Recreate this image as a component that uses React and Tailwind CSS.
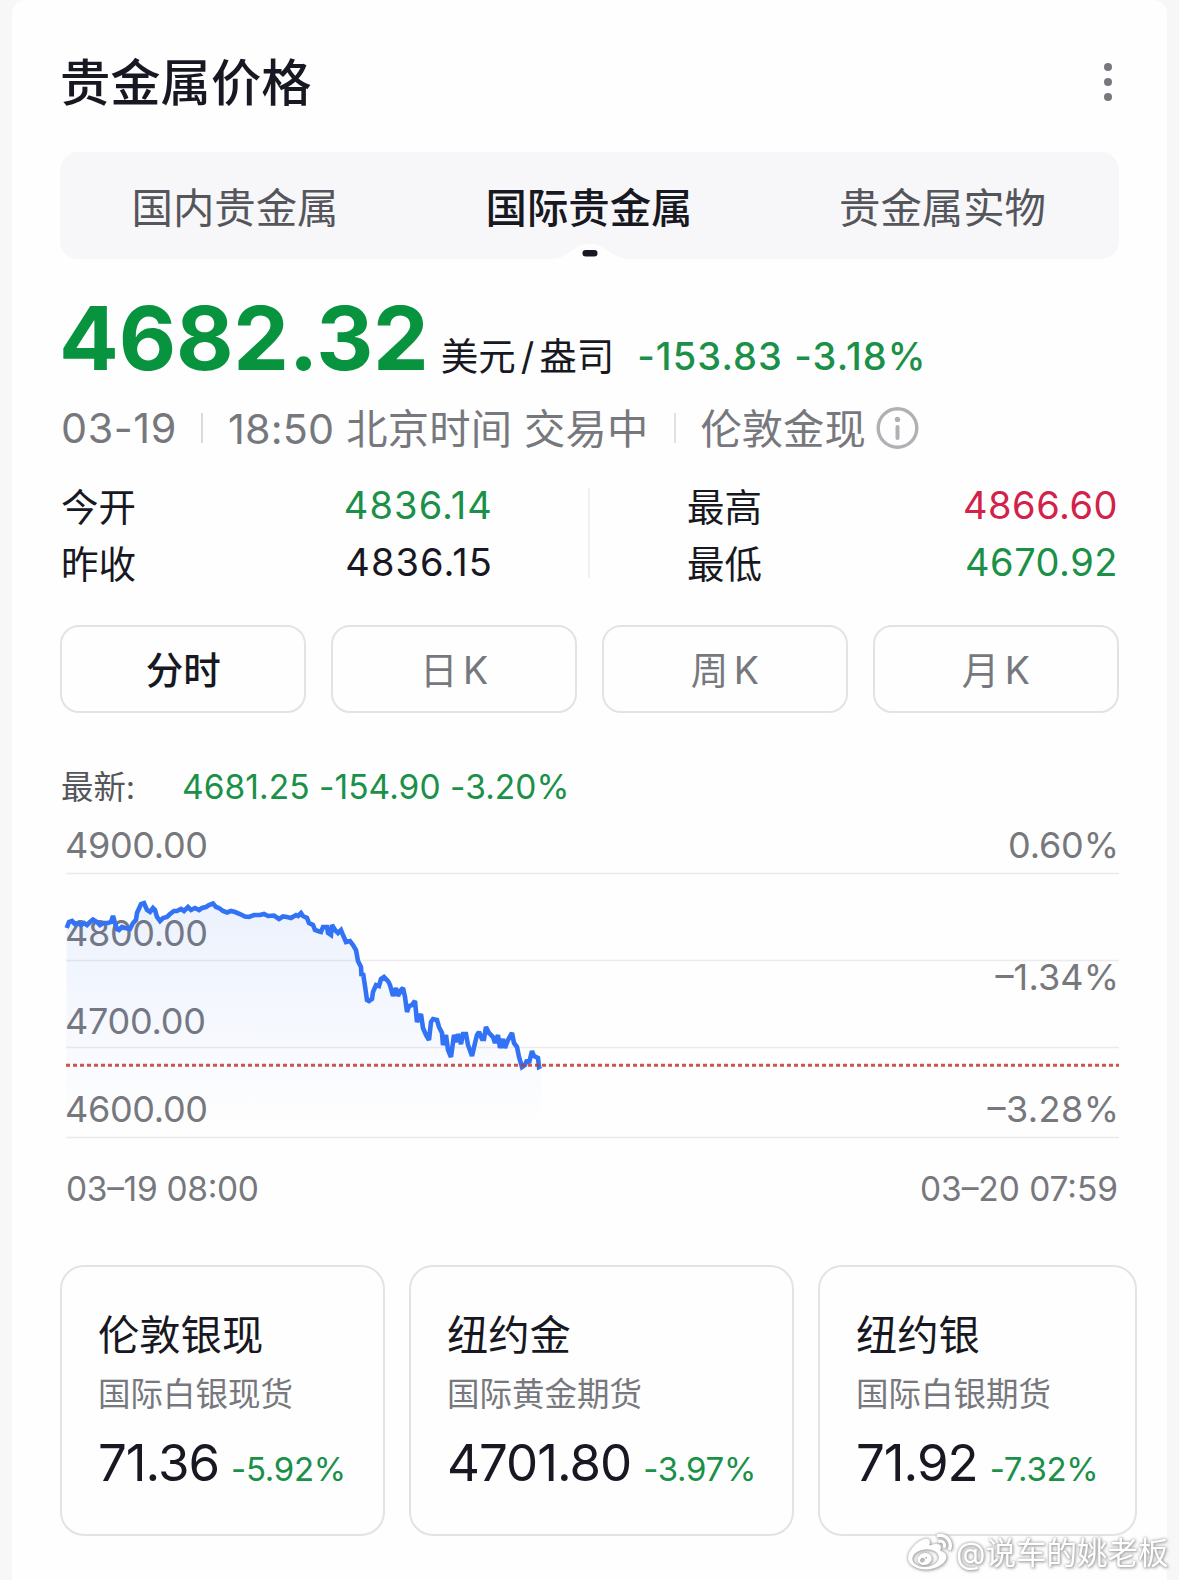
import { FaWeibo } from "react-icons/fa";

const LINE =
  "66.7,928 69,922 72,921 75,924 78,923 81,925 84,923 87,925 90,922 93,919.5 97,922 100,925 103,923 108,923 111,922 113,916 115,923 117,929 119,930 122,927 125,928 130,929 133,923 136,920 137,913 141,904 144,903 147,910 150,912 153,908 155,910 157,917 160,921 163,918 167,917 170,914 174,911 177,911 181,909 184,911 188,907 191,910 195,908 199,910 202,908 206,907 209,905 213,903.5 216,907 219,908 223,911 227,912.5 231,911 235,912 240,914 245,916.5 249,917 254,915 260,915 264,914 268,916 274,915.5 279,919 283,916.5 287,917 291,918 296,915 298,916 301,913 303,916 307,918 309,923 313,925 315,930 318,931 321,932 323,927 327,927 328,933 331,935 332,925 335,930 338,933 341,930 343,935 346,942 350,941 353,945 356,950 358,961 361,967 361.5,976 363,973 365,986 367,1000 369,1001 372,999 373,992 376,985 379,986 381,979 384,977 388,981 390,985 393,996 396,988 398,996 401,990 403,988 405,997 407,1012 409,1006 412,1005 415,1001 417,1022 421,1014 423,1028 426,1035 429,1040 431,1022 433,1019 437,1020 439,1027 442,1033 443,1045 446,1035 448,1050 451,1057 454,1035 457,1042 458,1034 461,1044 463,1034 466,1034 468,1045 472,1056 475,1043 477,1035 479,1032 482,1039 484,1039 486,1027 489,1033 493,1037 495,1043 498,1035 500,1048 503,1039 505,1048 508,1040 512,1033 514,1043 517,1047 519,1057 522,1067 525,1065 527,1060 529,1063 532,1051 534,1056 538,1058 539,1067 541,1066";

function Chart() {
  return (
    <svg
      className="block h-[410px] w-[1059px]"
      viewBox="60 806 1059 410"
      fontFamily='Inter, "Noto Sans CJK SC", sans-serif'
    >
      <defs>
        <linearGradient id="area" x1="0" y1="903" x2="0" y2="1128" gradientUnits="userSpaceOnUse">
          <stop offset="0" stopColor="#3273f6" stopOpacity="0.09" />
          <stop offset="1" stopColor="#3273f6" stopOpacity="0" />
        </linearGradient>
      </defs>
      <g stroke="#ebebed" strokeWidth="1.6">
        <path d="M66 873.5H1119M66 960.5H1119M66 1047.5H1119M66 1137.5H1119" />
      </g>
      <g fontSize="36" fill="#77787d">
        <text x="65" y="858" textLength="143">4900.00</text>
        <text x="65" y="946" textLength="143">4800.00</text>
        <text x="65" y="1034" textLength="141">4700.00</text>
        <text x="65" y="1122" textLength="143">4600.00</text>
        <text x="1008" y="858" textLength="111">0.60%</text>
        <text x="995.5" y="990" textLength="123.5">–1.34%</text>
        <text x="987.5" y="1122" textLength="131.5">–3.28%</text>
      </g>
      <g fontSize="33.5" fill="#77787d">
        <text x="66" y="1200.5" textLength="193">03–19 08:00</text>
        <text x="920" y="1200.5" textLength="198">03–20 07:59</text>
      </g>
      <polygon points={`66,1128 ${LINE} 541,1128`} fill="url(#area)" />
      <polyline points={LINE} fill="none" stroke="#3273f6" strokeWidth="4.6" strokeLinejoin="miter" strokeMiterlimit="2" />
      <path d="M66 1065.3H1119" stroke="#c0392f" strokeOpacity="0.85" strokeWidth="3" strokeDasharray="4 3" />
    </svg>
  );
}

function Stat({ label, value, color }) {
  return (
    <div className="flex h-[57px] items-center justify-between text-[38px]">
      <span className="pt-[6px] pl-px text-[37.5px] tracking-normal">{label}</span>
      <span className={color}>{value}</span>
    </div>
  );
}

function Period({ children, active }) {
  return (
    <div
      className={`flex h-[88px] flex-1 items-center justify-center rounded-[19px] border-2 border-[#e2e3e5] pt-[3px] text-[37.5px] [word-spacing:-5px] ${
        active ? "font-medium text-[#171821]" : "text-[#77787d]"
      }`}
    >
      {children}
    </div>
  );
}

function Quote({ width, name, desc, price, pct }) {
  return (
    <div className={`h-[271px] shrink-0 rounded-[24px] border-2 border-[#e2e3e5] pt-[41px] pl-9 ${width}`}>
      <div className="h-[54px] text-[41.3px] leading-[54px]">{name}</div>
      <div className="mt-[10px] h-[46px] text-[32.5px] leading-[46px] text-[#77787d]">{desc}</div>
      <div className="mt-5 flex items-baseline gap-3 leading-[50px] whitespace-nowrap">
        <span className="text-[51px] tracking-[-1px]">{price}</span>
        <span className="text-[33px] tracking-[-0.3px] text-[#1a9048]">{pct}</span>
      </div>
    </div>
  );
}

export default function App() {
  return (
    <div className="relative h-[1580px] w-[1179px] overflow-hidden bg-[#f7f7f7] px-3 font-[Inter,'Noto_Sans_CJK_SC',sans-serif] leading-none text-[#171821]">
      <main className="h-[1580px] rounded-t-[14px] bg-[#fefefe] pt-[46px] pr-12 pl-12">
        <header className="flex h-[70px] items-center justify-between">
          <h1 className="pt-1 text-[50.3px] font-medium">贵金属价格</h1>
          <div className="mr-[7px] flex flex-col gap-[7px] pt-px">
            <i className="size-2 rounded-full bg-[#77787d]" />
            <i className="size-2 rounded-full bg-[#77787d]" />
            <i className="size-2 rounded-full bg-[#77787d]" />
          </div>
        </header>

        <nav className="relative mt-9 grid h-[107px] w-[1059px] grid-cols-3 items-center rounded-[18px] bg-[#f7f7fa] pt-[6px] text-center text-[41.4px] text-[#55565b]">
          <span className="pr-[3px]">国内贵金属</span>
          <span className="pr-px font-medium text-[#171821]">国际贵金属</span>
          <span>贵金属实物</span>
          <svg className="absolute bottom-0 left-[490px] h-4 w-20" viewBox="0 0 80 16">
            <path d="M0 16C20 16 22 1 40 1S60 16 80 16Z" fill="#fefefe" />
            <rect x="32.5" y="7" width="15" height="6.5" rx="3.2" fill="#171821" />
          </svg>
        </nav>

        <div className="mt-[35px] flex h-[87px] items-baseline leading-[88px] whitespace-nowrap">
          <span className="-ml-px text-[88.5px] font-bold tracking-[-0.2px] text-[#08943f]">4682.32</span>
          <span className="ml-3 text-[37.5px]">
            美元<span className="mx-[5px]">/</span>盎司
          </span>
          <span className="ml-[23px] text-[38px] font-medium tracking-[1.1px] text-[#1a9048]">-153.83 -3.18%</span>
        </div>

        <div className="mt-[22px] flex h-[50px] items-center text-[41.3px] whitespace-nowrap text-[#77787d]">
          <span className="ml-px pt-[2px] tracking-[0.6px]">03-19</span>
          <i className="mr-[25px] ml-[24px] h-[30px] w-0.5 bg-[#d9dadd]" />
          <span className="pt-[3px] tracking-[0.2px]">18:50 北京时间 交易中</span>
          <i className="mr-6 ml-[26px] h-[30px] w-0.5 bg-[#e0e1e3]" />
          <span className="pt-[3px]">伦敦金现</span>
          <svg className="ml-[10px] size-[43px]" viewBox="0 0 43 43" fill="none" stroke="#b0b1b4">
            <circle cx="21.5" cy="21" r="19.3" strokeWidth="3.4" />
            <path d="M21.5 20V31" strokeWidth="4" strokeLinecap="round" />
            <circle cx="21.5" cy="12.4" r="2.7" fill="#b0b1b4" stroke="none" />
          </svg>
        </div>

        <div className="mt-[23px] flex h-[115px] w-[1059px]">
          <div className="w-[433px] tracking-[1.1px]">
            <Stat label="今开" value="4836.14" color="text-[#1a9048]" />
            <Stat label="昨收" value="4836.15" color="text-[#171821]" />
          </div>
          <i className="mt-3 ml-[95px] h-[90px] w-0.5 bg-[#f1f1f3]" />
          <div className="ml-[96px] flex-1 pr-px tracking-[0.5px]">
            <Stat label="最高" value="4866.60" color="text-[#d2224a]" />
            <Stat label="最低" value="4670.92" color="text-[#1a9048]" />
          </div>
        </div>

        <div className="mt-[34px] flex w-[1059px] gap-[24.5px]">
          <Period active>分时</Period>
          <Period>日 K</Period>
          <Period>周 K</Period>
          <Period>月 K</Period>
        </div>

        <div className="mt-[53px] flex h-10 items-center pt-[3px] whitespace-nowrap">
          <span className="w-[122px] pt-[2px] pl-px text-[32.4px] text-[#55565b]">最新:</span>
          <span className="text-[33.5px] tracking-[0.05px] text-[#1a9048]">4681.25 -154.90 -3.20%</span>
        </div>

        <Chart />

        <div className="mt-[49px] flex gap-6">
          <Quote width="w-[325px]" name="伦敦银现" desc="国际白银现货" price="71.36" pct="-5.92%" />
          <Quote width="w-[385px]" name="纽约金" desc="国际黄金期货" price="4701.80" pct="-3.97%" />
          <Quote width="w-[319px]" name="纽约银" desc="国际白银期货" price="71.92" pct="-7.32%" />
        </div>
      </main>

      <div className="absolute top-[1531px] left-[908px] flex items-center gap-1 whitespace-nowrap text-white [filter:drop-shadow(0_0_1.5px_#999)_drop-shadow(1px_1px_1px_#bbb)]">
        <FaWeibo className="size-11" />
        <span className="text-[30.5px]">@说车的姚老板</span>
      </div>
    </div>
  );
}
